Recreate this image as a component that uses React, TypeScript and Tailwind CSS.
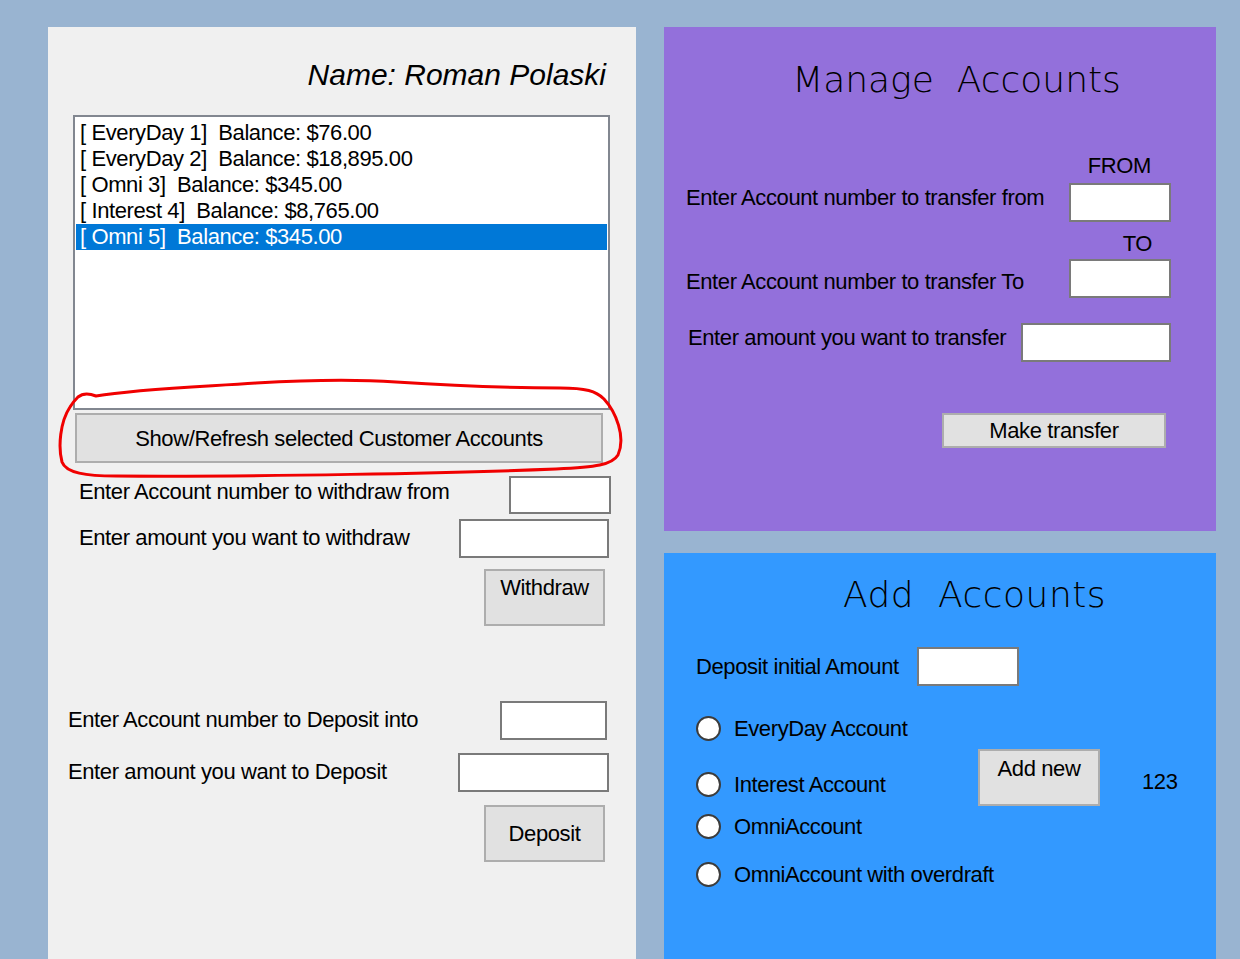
import React from 'react';

const Input = ({ className = '' }: { className?: string }) => (
  <div className={`shrink-0 bg-white border-2 border-[#7a7a7a] ${className}`} />
);

const Radio = ({ label, className = '' }: { label: string; className?: string }) => (
  <div className={`flex items-center h-[30px] ${className}`}>
    <div className="shrink-0 w-[25px] h-[25px] rounded-full bg-white border-2 border-[#3c3c3c]" />
    <span className="ml-[13px]">{label}</span>
  </div>
);

const accounts = [
  '[ EveryDay 1]  Balance: $76.00',
  '[ EveryDay 2]  Balance: $18,895.00',
  '[ Omni 3]  Balance: $345.00',
  '[ Interest 4]  Balance: $8,765.00',
  '[ Omni 5]  Balance: $345.00',
];

const App = () => {
  return (
    <div className="w-[1240px] h-[959px] bg-[#99b4d1] flex pt-[27px] pl-[48px] gap-[28px] overflow-hidden font-['Liberation_Sans',Arial,sans-serif] text-[22px] tracking-[-0.4px] text-black whitespace-pre">
      {/* customer panel */}
      <div className="relative w-[588px] h-[932px] bg-[#f0f0f0] flex flex-col">
        <p className="self-end mr-[30px] mt-[31px] italic text-[30px] leading-[34px] tracking-normal">
          Name: Roman Polaski
        </p>
        <div className="ml-[25px] mt-[23px] w-[537px] h-[295px] bg-white border-2 border-[#828790] px-[1px] pt-[3px]">
          {accounts.map((a, i) => (
            <div
              key={a}
              className={`pl-[4px] leading-[26px] ${i === 4 ? 'bg-[#0078d7] text-white' : ''}`}
            >
              {a}
            </div>
          ))}
        </div>
        <div className="ml-[27px] mt-[3px] w-[528px] h-[50px] bg-[#e1e1e1] border-2 border-[#adadad] flex items-center justify-center">
          Show/Refresh selected Customer Accounts
        </div>
        <div className="mt-[13px] h-[38px] flex items-center">
          <span className="pl-[31px] mb-[8px]">Enter Account number to withdraw from</span>
          <Input className="ml-auto mr-[25px] w-[102px] h-[38px]" />
        </div>
        <div className="mt-[5px] h-[39px] flex items-center">
          <span className="pl-[31px] mb-[3px]">Enter amount you want to withdraw</span>
          <Input className="ml-auto mr-[27px] w-[150px] h-[39px]" />
        </div>
        <div className="self-end mr-[31px] mt-[11px] w-[121px] h-[57px] bg-[#e1e1e1] border-2 border-[#adadad] pt-[4px] text-center leading-[26px]">
          Withdraw
        </div>
        <div className="mt-[75px] h-[39px] flex items-center">
          <span className="pl-[20px] mb-[2px]">Enter Account number to Deposit into</span>
          <Input className="ml-auto mr-[29px] w-[107px] h-[39px]" />
        </div>
        <div className="mt-[13px] h-[39px] flex items-center">
          <span className="pl-[20px] mb-[2px]">Enter amount you want to Deposit</span>
          <Input className="ml-auto mr-[27px] w-[151px] h-[39px]" />
        </div>
        <div className="self-end mr-[31px] mt-[13px] w-[121px] h-[57px] bg-[#e1e1e1] border-2 border-[#adadad] flex items-center justify-center">
          Deposit
        </div>

        {/* hand drawn red mark */}
        <svg
          className="absolute left-[8px] top-[350px] pointer-events-none"
          width="572"
          height="105"
          viewBox="0 0 572 105"
          fill="none"
        >
          <path
            d="M22 20 C28 15, 35 17, 40 19 C80 12, 140 10, 200 6 C250 3, 300 2, 340 5 C400 9, 460 11, 504 11 C530 11, 540 14, 548 22 C560 35, 570 60, 562 78 C556 88, 540 90, 500 92 C400 96, 200 100, 60 99 C30 99, 10 96, 6 85 C2 70, 4 45, 14 30 C17 25, 20 22, 22 20"
            stroke="#f00000"
            strokeWidth="3"
            strokeLinecap="round"
            strokeLinejoin="round"
          />
        </svg>
      </div>

      <div className="w-[552px] flex flex-col gap-[22px]">
        {/* manage accounts */}
        <div className="h-[504px] bg-[#9370db] flex flex-col">
          <h1 className="pt-[33px] pl-[33px] text-center text-[36px] leading-[40px] font-['DejaVu_Sans',sans-serif] font-extralight tracking-normal">
            Manage  Accounts
          </h1>
          <span className="self-end mr-[65px] mt-[54px] leading-[24px]">FROM</span>
          <div className="mt-[5px] h-[39px] flex items-center">
            <span className="pl-[22px] mb-[10px]">Enter Account number to transfer from</span>
            <Input className="ml-auto mr-[45px] w-[102px] h-[39px]" />
          </div>
          <span className="self-end mr-[64px] mt-[10px] leading-[24px]">TO</span>
          <div className="mt-[3px] h-[39px] flex items-center">
            <span className="pl-[22px] mt-[5px]">Enter Account number to transfer To</span>
            <Input className="ml-auto mr-[45px] w-[102px] h-[39px]" />
          </div>
          <div className="mt-[25px] h-[39px] flex items-center">
            <span className="pl-[24px] mb-[11px]">Enter amount you want to transfer</span>
            <Input className="ml-auto mr-[45px] w-[150px] h-[39px]" />
          </div>
          <div className="self-end mr-[50px] mt-[51px] w-[224px] h-[35px] bg-[#e1e1e1] border-2 border-[#adadad] flex items-center justify-center">
            Make transfer
          </div>
        </div>

        {/* add accounts */}
        <div className="flex-1 bg-[#3399ff] flex flex-col">
          <h1 className="pt-[22px] pl-[69px] text-center text-[36px] leading-[40px] font-['DejaVu_Sans',sans-serif] font-extralight tracking-[0.5px]">
            Add  Accounts
          </h1>
          <div className="mt-[32px] h-[39px] flex items-center pl-[32px]">
            <span className="w-[221px]">Deposit initial Amount</span>
            <Input className="w-[102px] h-[39px]" />
          </div>
          <div className="flex pl-[32px]">
            <div className="w-[282px] shrink-0 flex flex-col">
              <Radio label="EveryDay Account" className="mt-[27px]" />
              <Radio label="Interest Account" className="mt-[26px]" />
              <Radio label="OmniAccount" className="mt-[12px]" />
              <Radio label="OmniAccount with overdraft" className="mt-[18px]" />
            </div>
            <div className="flex items-center self-start mt-[63px]">
              <div className="w-[122px] h-[57px] bg-[#e1e1e1] border-2 border-[#adadad] pt-[5px] text-center leading-[26px]">
                Add new
              </div>
              <span className="ml-[42px] mt-[7px]">123</span>
            </div>
          </div>
        </div>
      </div>
    </div>
  );
};

export default App;
